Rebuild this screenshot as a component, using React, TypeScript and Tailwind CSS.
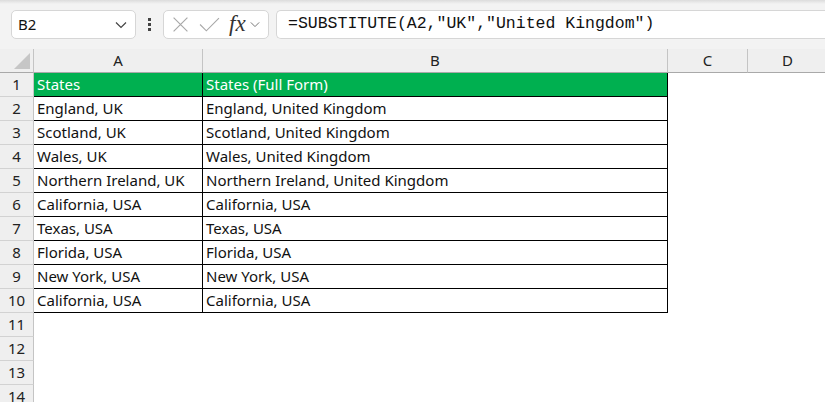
import React from "react";

const rows: [string, string][] = [
  ["England, UK", "England, United Kingdom"],
  ["Scotland, UK", "Scotland, United Kingdom"],
  ["Wales, UK", "Wales, United Kingdom"],
  ["Northern Ireland, UK", "Northern Ireland, United Kingdom"],
  ["California, USA", "California, USA"],
  ["Texas, USA", "Texas, USA"],
  ["Florida, USA", "Florida, USA"],
  ["New York, USA", "New York, USA"],
  ["California, USA", "California, USA"],
];

function Chevron({ className }: { className?: string }) {
  return (
    <svg className={className} viewBox="0 0 12 8" fill="none" stroke="currentColor" strokeWidth="1.2">
      <path d="M1 1.5 L6 6.5 L11 1.5" />
    </svg>
  );
}

export default function App() {
  const font = { fontFamily: '"Noto Sans", sans-serif' };
  return (
    <div className="w-[825px] h-[402px] overflow-hidden bg-white flex flex-col" style={font}>
      {/* formula bar area */}
      <div className="h-[49px] shrink-0 bg-gradient-to-b from-[#dcdcdc] via-[#f3f3f3] to-[#f3f3f3] bg-[length:100%_8px] bg-no-repeat bg-[#f3f3f3] flex items-start pt-[10px] pl-[11px]">
        <div className="w-[125px] h-[29px] bg-white border border-[#d6d6d6] rounded-[5px] flex items-center justify-between pl-[6px] pr-[8px]">
          <span className="text-[15px] text-[#111]">B2</span>
          <Chevron className="w-[12px] h-[8px] text-[#444]" />
        </div>
        <div className="w-[27px] h-[29px] flex flex-col items-center justify-center gap-[2px]">
          <div className="w-[3px] h-[3px] bg-[#444]" />
          <div className="w-[3px] h-[3px] bg-[#444]" />
          <div className="w-[3px] h-[3px] bg-[#444]" />
        </div>
        <div className="w-[106px] h-[29px] bg-white border border-[#d6d6d6] rounded-[5px] flex items-center pl-[8px]">
          <svg className="w-[17px] h-[17px] text-[#a8a8a8]" viewBox="0 0 16 16" fill="none" stroke="currentColor" strokeWidth="1.1">
            <path d="M1.5 1.5 L14.5 14.5 M14.5 1.5 L1.5 14.5" />
          </svg>
          <svg className="w-[21px] h-[17px] ml-[10px] text-[#a8a8a8]" viewBox="0 0 20 16" fill="none" stroke="currentColor" strokeWidth="1.1">
            <path d="M1 8 L7 14 L19 2" />
          </svg>
          <span
            className="ml-[9px] text-[23px] italic leading-none text-[#333] -mt-[3px]"
            style={{ fontFamily: '"Liberation Serif", serif' }}
          >
            fx
          </span>
          <Chevron className="w-[10px] h-[7px] ml-[4px] text-[#777]" />
        </div>
        <div className="ml-[7px] flex-1 h-[29px] bg-white border-y border-l border-[#d6d6d6] rounded-l-[5px] flex items-center pl-[11px]">
          <span
            className="text-[16.5px] text-[#111] whitespace-pre"
            style={{ fontFamily: '"Liberation Mono", monospace' }}
          >
            =SUBSTITUTE(A2,"UK","United Kingdom")
          </span>
        </div>
      </div>

      {/* grid */}
      <div className="grid grid-cols-[34px_169px_465px_80px_80px] auto-rows-[24px] text-[15px] text-[#111]">
        {/* header row */}
        <div className="bg-[#efefef] border-b border-[#a9a9a9] border-r border-r-[#c4c4c4] relative">
          <svg className="absolute left-[14px] top-[4px] w-[16px] h-[16px]" viewBox="0 0 16 16">
            <path d="M16 0 L16 16 L0 16 Z" fill="#c6c6c6" />
          </svg>
        </div>
        {["A", "B", "C", "D"].map((c) => (
          <div
            key={c}
            className="bg-[#efefef] border-b border-[#a9a9a9] border-r border-r-[#c4c4c4] flex items-center justify-center text-[#222]"
          >
            {c}
          </div>
        ))}

        {/* row 1 */}
        <div className="bg-[#efefef] border-r border-[#c4c4c4] border-b border-b-[#d2d2d2] flex items-center justify-center text-[#222]">1</div>
        <div className="bg-[#00b050] text-white border-r border-black border-b border-b-black flex items-center pl-[3px]">States</div>
        <div className="bg-[#00b050] text-white border-r border-black border-b border-b-black flex items-center pl-[3px]">States (Full Form)</div>
        <div />
        <div />

        {rows.map(([a, b], i) => (
          <React.Fragment key={i}>
            <div className="bg-[#efefef] border-r border-[#c4c4c4] border-b border-b-[#d2d2d2] flex items-center justify-center text-[#222]">
              {i + 2}
            </div>
            <div className="border-r border-black border-b border-b-black flex items-center pl-[3px]">{a}</div>
            <div className="border-r border-black border-b border-b-black flex items-center pl-[3px]">{b}</div>
            <div />
            <div />
          </React.Fragment>
        ))}

        {[11, 12, 13, 14].map((n) => (
          <React.Fragment key={n}>
            <div className="bg-[#efefef] border-r border-[#c4c4c4] border-b border-b-[#d2d2d2] flex items-center justify-center text-[#222]">
              {n}
            </div>
            <div />
            <div />
            <div />
            <div />
          </React.Fragment>
        ))}
      </div>
    </div>
  );
}
